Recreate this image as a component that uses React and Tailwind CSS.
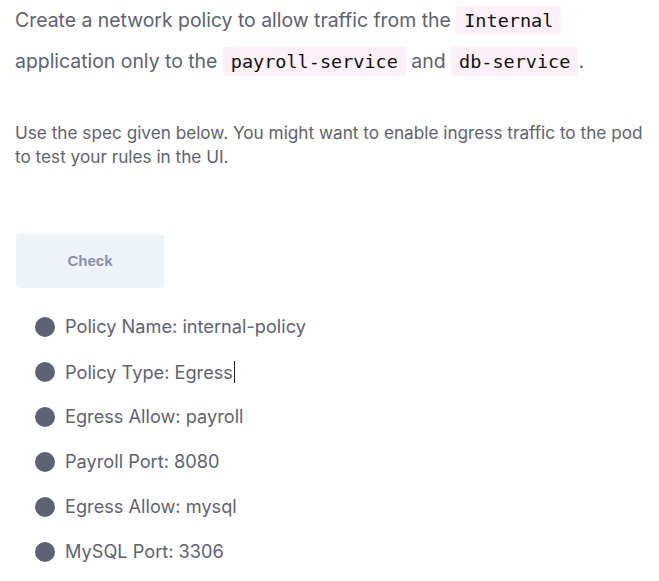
import React from "react";

const Code = ({ children }) => (
  <code className="rounded-[3px] bg-[#fdf0f9] px-[8px] py-[4px] font-['DejaVu_Sans_Mono',monospace] text-[18.5px] text-[#111111]">
    {children}
  </code>
);

const items = [
  "Policy Name: internal-policy",
  "Policy Type: Egress",
  "Egress Allow: payroll",
  "Payroll Port: 8080",
  "Egress Allow: mysql",
  "MySQL Port: 3306",
];

export default function App() {
  return (
    <div className="h-[581px] w-[659px] overflow-hidden bg-white font-['Inter',sans-serif] text-[#5f6270]">
      <div className="pl-[15px]">
        <p className="text-[19.4px] leading-[40px]">
          Create a network policy to allow traffic from the <Code>Internal</Code>
          <br />
          application only to the <Code>payroll-service</Code> and <Code>db-service</Code>.
        </p>
        <p className="mt-[39px] whitespace-nowrap text-[17.2px] leading-[24px]">
          Use the spec given below. You might want to enable ingress traffic to the pod
          <br />
          to test your rules in the UI.
        </p>
      </div>
      <div className="mt-[65px] px-[16px]">
        <button className="flex h-[54px] w-[148px] items-center justify-center rounded-[4px] bg-[#eef3f8] font-['Liberation_Sans',sans-serif] text-[15px] font-bold text-[#8690ab]">
          Check
        </button>
      </div>
      <ul className="mt-[26px] flex flex-col gap-[20px] pl-[35px]">
        {items.map((t, i) => (
          <li key={i} className="flex h-[25px] items-center gap-[10px] text-[18.2px]">
            <span className="h-[20px] w-[20px] shrink-0 rounded-full bg-[#5d6275]" />
            <span className="text-[#5f6270]">
              {t}
              {i === 1 && <span className="ml-[1px] inline-block h-[22px] w-[1px] translate-y-[4px] bg-[#222]" />}
            </span>
          </li>
        ))}
      </ul>
    </div>
  );
}
